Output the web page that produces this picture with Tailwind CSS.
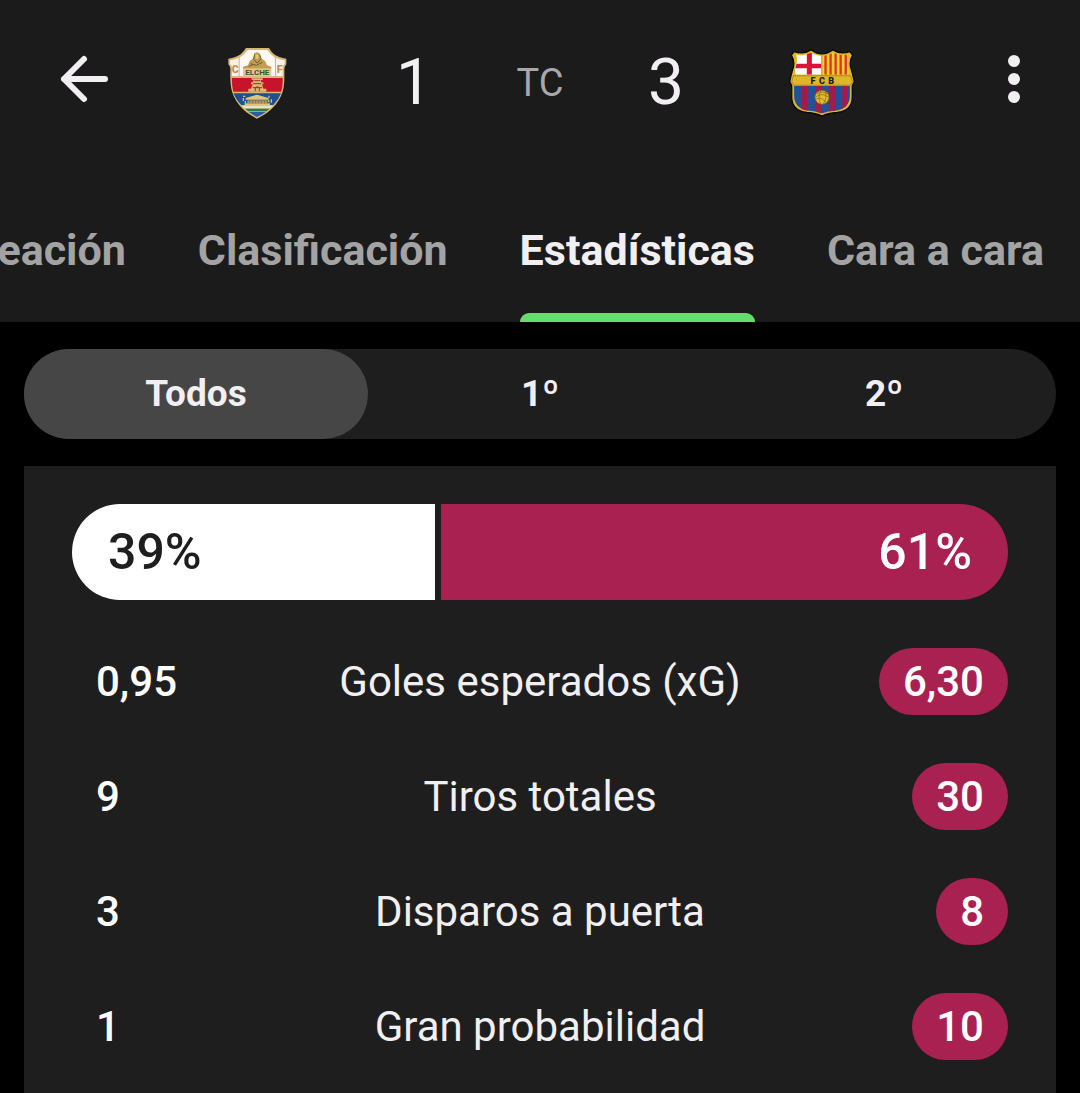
<!DOCTYPE html>
<html lang="es">
<head>
    <meta charset="UTF-8">
    <meta name="viewport" content="width=device-width, initial-scale=1.0">
    <title>Elche 1 - 3 Barcelona | Estadísticas</title>
    <script src="https://cdn.jsdelivr.net/npm/@tailwindcss/browser@4"></script>
</head>
<body class="bg-black text-[#f1eff2] font-[Roboto,sans-serif] min-h-screen flex flex-col">

    <!-- Cabecera -->
    <header class="bg-[#1b1b1b]">
        <div class="flex items-start justify-between px-[42px] pt-[43px] pb-[47px]">
            <button type="button" aria-label="Volver" class="w-[66px] h-[72px] flex justify-end">
                <svg class="size-[72px] -mr-3 shrink-0" viewBox="0 0 72 72" fill="none" stroke="currentColor" stroke-width="6" stroke-linecap="round" stroke-linejoin="round">
                    <path d="M57 36H16M36 16L16 36L36 56"/>
                </svg>
            </button>

            <!-- Marcador -->
            <div class="flex items-center gap-[92px] pt-1">
                <div class="w-16 flex justify-center">
                    <svg class="w-[60px] h-[72px]" viewBox="32 21 180 216" role="img" aria-label="Elche">
                        <path d="M86 24H155Q160 34 170 43Q184 53 207 56V73Q200 79 201 90Q202 120 199 142C193 180 164 216 119 236C76 216 47 180 41 142Q38 120 39 90Q40 79 33 73V56Q56 53 70 43Q80 34 86 24Z" fill="#d5b777"/>
                        <path d="M91 30H150Q158 43 173 53V108H67V53Q82 43 91 30Z" fill="#fbf9f2"/>
                        <path d="M38 61Q52 59 64 54V108H44V84Q44 77 38 71ZM176 54Q188 59 202 61V71Q196 77 196 84V108H176Z" fill="#f6f2e8"/>
                        <path d="M44 114H196Q197 137 192 155H48Q43 137 44 114Z" fill="#c7142c"/>
                        <path d="M49 160H191Q184 179 168 195H72Q55 179 49 160Z" fill="#214d91"/>
                        <path d="M73 197H167L158 205H82Z" fill="#e6e3ca"/>
                        <path d="M83 206H157L147 214H93Z" fill="#287d4c"/>
                        <path d="M95 216H145Q134 224 119 231Q105 224 95 216Z" fill="#275da5"/>
                        <!-- Dama -->
                        <path d="M77 86V80L92 76L97 63L108 55L110 41Q119 32 128 41L131 55L143 63L149 76L162 80V86Z" fill="#c39e52"/>
                        <path d="M114 46Q119 41 124 46L122 56H115Z" fill="#e4c77e"/>
                        <path d="M109 58L119 69L132 57M100 71L117 76L135 67M94 79L109 73M112 44L109 57M127 44L131 56" fill="none" stroke="#755b27" stroke-width="3"/>
                        <path d="M77 87H162V109H77Z" fill="#e2c987"/>
                        <text x="120" y="106" text-anchor="middle" font-size="24" font-weight="700" fill="#315631" font-family="Roboto, sans-serif">ELCHE</text>
                        <text x="54" y="100" text-anchor="middle" font-size="32" font-weight="900" fill="#b5965a" font-family="Roboto, sans-serif">C</text>
                        <text x="187" y="100" text-anchor="middle" font-size="32" font-weight="900" fill="#b5965a" font-family="Roboto, sans-serif">F</text>
                        <!-- Puerta y templo -->
                        <path d="M103 115H136V120H130L132 127H138V133H134L138 146H147V155H93V146H101L106 133H101V127H107L109 120H103Z" fill="#dcb873"/>
                        <path d="M111 122H128M107 131H132M114 153V143Q120 137 126 143V153M106 143H134" fill="none" stroke="#8c3829" stroke-width="3"/>
                        <path d="M85 174L119 164L154 174V179H85Z" fill="#e1c47c"/>
                        <path d="M90 181H150V190H90Z" fill="#b89b59"/>
                        <path d="M82 190H158V196H82Z" fill="#e1c47c"/>
                        <path d="M97 182V190M106 182V190M115 182V190M124 182V190M133 182V190M142 182V190" stroke="#5b5b43" stroke-width="2"/>
                        <path d="M77 169H84M78 174V183M84 183V191M155 167V173M162 178V188M154 180V187" stroke="#d4bf82" stroke-width="4"/>
                    </svg>
                </div>

                <div class="flex items-center gap-16 text-[64px] leading-[72px]">
                    <span class="w-16 text-center">1</span>
                    <span class="w-[60px] text-center text-[38px] text-[#a9a7aa]">TC</span>
                    <span class="w-16 text-center">3</span>
                </div>

                <div class="w-16 flex justify-center">
                    <svg class="w-[66px] h-[68px] shrink-0" viewBox="25 32 196 201" role="img" aria-label="Barcelona">
                        <defs>
                            <clipPath id="barca-campo">
                                <path d="M40 141H206V171C206 195 190 211 165 214C147 215 134 218 123 223C112 218 99 215 81 214C56 211 40 195 40 171Z"/>
                            </clipPath>
                            <clipPath id="barca-arriba">
                                <path d="M47 48Q68 54 89 43Q106 53 123 52Q140 53 157 43Q178 54 199 48Q194 72 204 94L201 108H45L42 94Q52 72 47 48Z"/>
                            </clipPath>
                        </defs>
                        <path d="M40 39Q69 49 90 34Q106 46 123 46Q140 46 156 34Q177 49 206 39L214 50Q202 70 210 92Q215 108 219 129Q212 139 213 147V173C213 202 195 217 168 220C148 221 136 224 123 231C110 224 98 221 78 220C51 217 33 202 33 173V147Q34 139 27 129Q31 108 36 92Q44 70 32 50Z" fill="#dfb62a" stroke="#080808" stroke-width="4"/>
                        <g clip-path="url(#barca-arriba)">
                            <path d="M38 38H123V110H38Z" fill="#fff"/>
                            <path d="M78 38H93V110H78ZM38 75H121V89H38Z" fill="#d91336"/>
                            <path d="M124 38H208V110H124Z" fill="#f5cf2c"/>
                            <path d="M130 38H137V110H130ZM145 38H152V110H145ZM160 38H167V110H160ZM175 38H182V110H175ZM190 38H197V110H190Z" fill="#d6382d"/>
                        </g>
                        <path d="M122 50V109" stroke="#c99b21" stroke-width="3"/>
                        <path d="M38 111H208L213 129Q209 134 208 139H38Q37 134 33 129Z" fill="#dfb62a" stroke="#957619" stroke-width="2"/>
                        <text y="135" text-anchor="middle" font-size="27" font-weight="900" fill="#171b15" font-family="Roboto, sans-serif"><tspan x="96">F</tspan><tspan x="123">C</tspan><tspan x="150">B</tspan></text>
                        <g clip-path="url(#barca-campo)">
                            <path d="M38 140H208V225H38Z" fill="#23509b"/>
                            <path d="M61 140H82V225H61ZM103 140H123V225H103ZM143 140H163V225H143ZM183 140H198V225H183Z" fill="#a31b4b"/>
                        </g>
                        <circle cx="123" cy="175" r="21" fill="#e5bb2e" stroke="#70551f" stroke-width="2"/>
                        <path d="M107 164Q125 155 139 164M104 174Q122 160 142 174M119 156Q109 175 119 195M132 158Q140 175 127 194M104 181Q120 171 134 189" fill="none" stroke="#806020" stroke-width="2"/>
                    </svg>
                </div>
            </div>

            <button type="button" aria-label="Más opciones" class="w-[66px] h-[72px] flex justify-end">
                <svg class="w-12 h-[72px]" viewBox="0 0 48 72" fill="currentColor">
                    <circle cx="24" cy="18" r="6"/>
                    <circle cx="24" cy="36" r="6"/>
                    <circle cx="24" cy="54" r="6"/>
                </svg>
            </button>
        </div>

        <!-- Pestañas -->
        <nav class="flex justify-end overflow-hidden whitespace-nowrap text-[43px] leading-[48px] font-bold text-[#a3a3a3]">
            <a href="#" class="px-9 pt-[60px] pb-12">Alineación</a>
            <a href="#" class="px-9 pt-[60px] pb-12">Clasificación</a>
            <a href="#" aria-current="page" class="px-9 pt-[60px] text-[#f1eff2]">
                Estadísticas
                <span class="block h-[9px] mt-[39px] rounded-t-[9px] bg-[#64dd6d]"></span>
            </a>
            <a href="#" class="px-9 pt-[60px] pb-12">Cara a cara</a>
        </nav>
    </header>

    <main class="px-6 pt-[27px] grow flex flex-col">
        <!-- Periodo -->
        <div class="grid grid-cols-3 rounded-full bg-[#1e1e1e] text-[37px] leading-[90px] font-bold">
            <button type="button" aria-pressed="true" class="rounded-full bg-[#464646]">Todos</button>
            <button type="button" aria-pressed="false" class="rounded-full">1º</button>
            <button type="button" aria-pressed="false" class="rounded-full">2º</button>
        </div>

        <section class="grow mt-[27px] bg-[#1e1e1e] px-12 pt-[38px]">
            <!-- Posesión -->
            <div class="flex gap-[6px] text-[50px] leading-[96px] font-medium">
                <div class="basis-0 rounded-l-full bg-white text-[#1e1e1e]" style="flex-grow: 39"><span class="pl-9">39%</span></div>
                <div class="basis-0 rounded-r-full bg-[#a92150] text-right text-white" style="flex-grow: 61"><span class="pr-9">61%</span></div>
            </div>

            <table class="w-full table-fixed mt-6 text-[42px] leading-[67px]">
                <tbody>
                    <tr>
                        <td class="w-1/4 py-6 pl-6 font-medium text-white">0,95</td>
                        <th scope="row" class="w-1/2 font-normal">Goles esperados (xG)</th>
                        <td class="w-1/4 text-right font-medium text-white"><span class="inline-block align-top rounded-full bg-[#a92150] px-6">6,30</span></td>
                    </tr>
                    <tr>
                        <td class="py-6 pl-6 font-medium text-white">9</td>
                        <th scope="row" class="font-normal">Tiros totales</th>
                        <td class="text-right font-medium text-white"><span class="inline-block align-top rounded-full bg-[#a92150] px-6">30</span></td>
                    </tr>
                    <tr>
                        <td class="py-6 pl-6 font-medium text-white">3</td>
                        <th scope="row" class="font-normal">Disparos a puerta</th>
                        <td class="text-right font-medium text-white"><span class="inline-block align-top rounded-full bg-[#a92150] px-6">8</span></td>
                    </tr>
                    <tr>
                        <td class="py-6 pl-6 font-medium text-white">1</td>
                        <th scope="row" class="font-normal">Gran probabilidad</th>
                        <td class="text-right font-medium text-white"><span class="inline-block align-top rounded-full bg-[#a92150] px-6">10</span></td>
                    </tr>
                </tbody>
            </table>
        </section>
    </main>

</body>
</html>
